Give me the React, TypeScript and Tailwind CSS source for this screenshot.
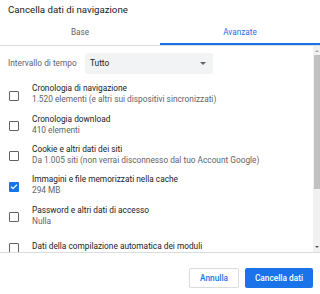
import { Check } from "lucide-react";

const items = [
  { title: "Cronologia di navigazione", sub: "1.520 elementi (e altri sui dispositivi sincronizzati)", checked: false },
  { title: "Cronologia download", sub: "410 elementi", checked: false },
  { title: "Cookie e altri dati dei siti", sub: "Da 1.005 siti (non verrai disconnesso dal tuo Account Google)", checked: false },
  { title: "Immagini e file memorizzati nella cache", sub: "294 MB", checked: true },
  { title: "Password e altri dati di accesso", sub: "Nulla", checked: false },
  { title: "Dati della compilazione automatica dei moduli", sub: "", checked: false },
];

export default function App() {
  return (
    <div className="flex h-[294px] w-[320px] flex-col overflow-hidden bg-white font-['Roboto',sans-serif] text-[#202124]">
      <h1 className="px-2 pt-[4px] text-[9.7px] leading-[12px]">Cancella dati di navigazione</h1>

      <div className="mt-[11px] flex border-b border-[#dadce0]">
        <div className="flex h-[18px] flex-1 items-start justify-center text-[8.2px] leading-[10px] text-[#5f6368]">Base</div>
        <div className="flex h-[18px] flex-1 items-start justify-center border-b-2 border-[#1a73e8] text-[8.2px] leading-[10px] text-[#1a73e8]">
          Avanzate
        </div>
      </div>

      <div className="flex h-[207px] border-b border-[#dadce0]">
        <div className="flex-1 overflow-hidden">
          <div className="mt-[7px] flex items-center pl-2">
            <span className="w-[77px] text-[8.3px] text-[#5f6368]">Intervallo di tempo</span>
            <div className="flex h-[21px] w-[128px] items-center justify-between rounded-[3px] bg-[#f1f3f4] px-[5px] text-[8.3px]">
              <span>Tutto</span>
              <span className="mr-[2px] h-0 w-0 border-x-[3px] border-t-[3px] border-x-transparent border-t-[#5f6368]" />
            </div>
          </div>

          <div className="mt-[5px]">
            {items.map((it) => (
              <div key={it.title} className="flex h-[30.4px] items-center">
                <div className="flex w-[32px] justify-start pl-[9px] pt-[3px]">
                  {it.checked ? (
                    <div className="flex h-[10px] w-[10px] items-center justify-center rounded-[1px] bg-[#1a73e8]">
                      <Check size={8} strokeWidth={3.5} color="white" />
                    </div>
                  ) : (
                    <div className="h-[10px] w-[10px] rounded-[1px] border-[1.5px] border-[#5f6368]" />
                  )}
                </div>
                <div className="flex flex-col">
                  <span className="text-[8.3px] leading-[11px]">{it.title}</span>
                  <span className="text-[8.3px] leading-[11px] text-[#5f6368]">{it.sub}</span>
                </div>
              </div>
            ))}
          </div>
        </div>

        <div className="flex w-[7px] flex-col items-center bg-[#f1f1f1] py-[4px]">
          <span className="h-0 w-0 border-x-[2px] border-b-[2px] border-x-transparent border-b-[#a3a3a3]" />
          <div className="mt-[3px] h-[134px] w-[6px] bg-[#c1c1c1]" />
          <div className="flex-1" />
          <span className="h-0 w-0 border-x-[2px] border-t-[2px] border-x-transparent border-t-[#505050]" />
        </div>
      </div>

      <div className="flex justify-end gap-[6px] pr-[7px] pt-[15px]">
        <button className="h-[20px] w-[50px] rounded-[2px] border border-[#dadce0] bg-white text-[8.3px] font-medium text-[#1a73e8]">
          Annulla
        </button>
        <button className="h-[20px] w-[68px] rounded-[2px] bg-[#1a73e8] text-[8.3px] font-medium text-white">
          Cancella dati
        </button>
      </div>
    </div>
  );
}
